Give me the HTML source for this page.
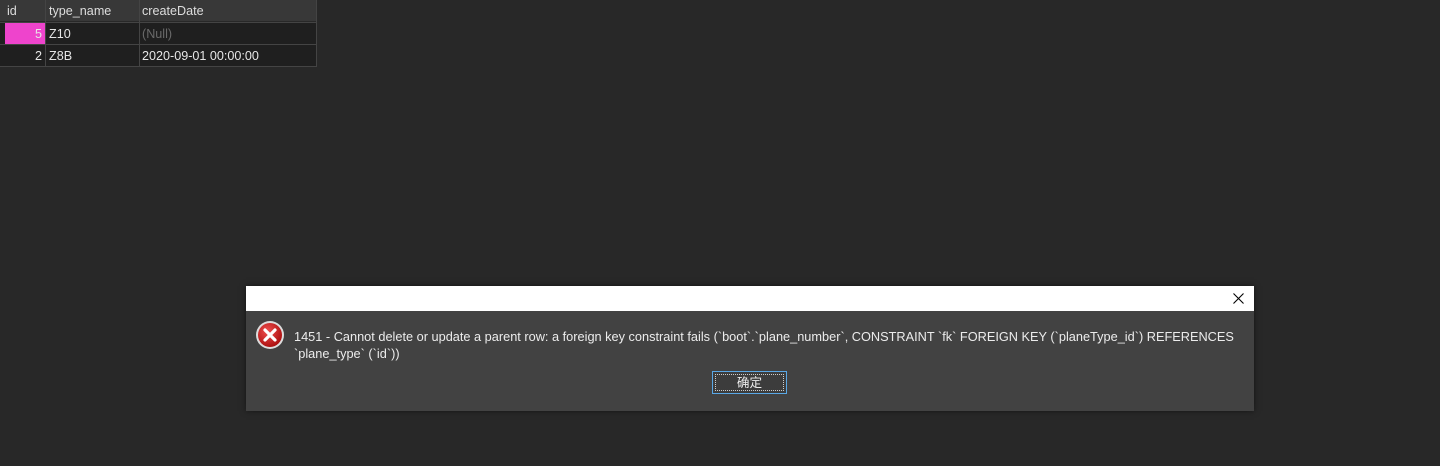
<!DOCTYPE html>
<html><head><meta charset="utf-8"><style>
body{margin:0;width:1440px;height:466px;background:#282828;font-family:"Liberation Sans","Noto Sans CJK SC",sans-serif;font-size:12.6px;color:#e6e6e6;position:relative;overflow:hidden}
.c{position:absolute;height:21px;line-height:22px;box-sizing:border-box;white-space:nowrap}
.h{background:#383838;color:#ddd}
.r{background:#1f1f1f}
.g{position:absolute;background:#444}
#dlg{position:absolute;left:246px;top:286px;width:1008px;height:125px;background:#424242;box-shadow:0 0 6px rgba(0,0,0,.5)}
#tb{height:25px;background:#fff}
#msg{position:absolute;left:48px;top:42px;width:955px;line-height:17px;color:#ececec;font-size:12.75px;white-space:nowrap}
#btn{position:absolute;left:466px;top:85px;width:75px;height:23px;box-sizing:border-box;border:1px solid #5aa8e6;background:#3c3c3c;text-align:center;line-height:22px;color:#eee}
#btn span{position:absolute;inset:2px;border:1px dotted #ccc}
</style></head><body>
<div class="c h" style="left:0;top:0;width:45px;padding-left:7px">id</div>
<div class="c h" style="left:46px;top:0;width:93px;padding-left:3px">type_name</div>
<div class="c h" style="left:140px;top:0;width:177px;padding-left:2px">createDate</div>
<div class="c r" style="left:0;top:23px;width:5px;"></div>
<div class="c" style="left:5px;top:23px;width:40px;background:#ee44cc;text-align:right;padding-right:3px">5</div>
<div class="c r" style="left:46px;top:23px;width:93px;padding-left:3px">Z10</div>
<div class="c r" style="left:140px;top:23px;width:177px;padding-left:2px;color:#6a6a6a">(Null)</div>
<div class="c r" style="left:0;top:45px;width:45px;text-align:right;padding-right:3px">2</div>
<div class="c r" style="left:46px;top:45px;width:93px;padding-left:3px">Z8B</div>
<div class="c r" style="left:140px;top:45px;width:177px;padding-left:2px">2020-09-01 00:00:00</div>
<div class="g" style="left:0;top:22px;width:317px;height:1px"></div>
<div class="g" style="left:0;top:44px;width:317px;height:1px"></div>
<div class="g" style="left:0;top:66px;width:317px;height:1px"></div>
<div class="g" style="left:45px;top:0;width:1px;height:67px"></div>
<div class="g" style="left:139px;top:0;width:1px;height:67px"></div>
<div class="g" style="left:316px;top:0;width:1px;height:67px"></div>
<div id="dlg">
<div id="tb"><svg style="position:absolute;right:10px;top:7px" width="11" height="11"><path d="M0.5 0.5L10.5 10.5M10.5 0.5L0.5 10.5" stroke="#000" stroke-width="1.1"/></svg></div>
<svg style="position:absolute;left:9px;top:34px" width="30" height="30" viewBox="0 0 30 30"><defs><radialGradient id="rg" cx="40%" cy="35%" r="70%"><stop offset="0" stop-color="#f05050"/><stop offset="1" stop-color="#a80c0c"/></radialGradient></defs><circle cx="15" cy="15" r="14" fill="#ddd"/><circle cx="15" cy="15" r="12" fill="url(#rg)"/><path d="M10 10L20 20M20 10L10 20" stroke="#fff" stroke-width="3.2" stroke-linecap="round"/></svg>
<div id="msg">1451 - Cannot delete or update a parent row: a foreign key constraint fails (`boot`.`plane_number`, CONSTRAINT `fk` FOREIGN KEY (`planeType_id`) REFERENCES<br>`plane_type` (`id`))</div>
<div id="btn"><span></span>确定</div>
</div>
</body></html>
